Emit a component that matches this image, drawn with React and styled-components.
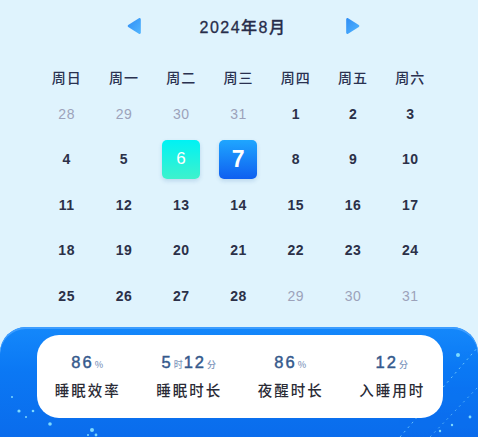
import styled, { createGlobalStyle } from 'styled-components'

const GlobalStyle = createGlobalStyle`
    html, body {
        margin: 0;
        padding: 0;
        background: #dff3fd;
    }
    body {
        font-family: "Liberation Sans", "Noto Sans CJK SC", sans-serif;
    }
`

const Page = styled.div`
    height: 437px;
    display: flex;
    flex-direction: column;
    background: #dff3fd;
    overflow: hidden;
`

const Header = styled.div`
    height: 52px;
    display: flex;
    align-items: center;
    justify-content: center;
    gap: 58px;
    padding-left: 8px;
`

const Title = styled.div`
    font-size: 16px;
    letter-spacing: 1.5px;
    color: #272d4a;
    font-weight: 500;
    -webkit-text-stroke: 0.3px #272d4a;
`

const ArrowButton = styled.svg`
    width: 16px;
    height: 20px;
    display: block;
`

const Grid = styled.div`
    margin: 11px 0 0 38px;
    width: 401px;
    display: grid;
    grid-template-columns: repeat(7, 1fr);
`

const WeekCell = styled.div`
    height: 28px;
    display: flex;
    align-items: center;
    justify-content: center;
    font-family: "Noto Sans CJK SC", sans-serif;
    font-size: 14px;
    font-weight: 500;
    letter-spacing: 1px;
    color: #2a3150;
`

const DayCell = styled.div`
    height: 45.5px;
    display: flex;
    align-items: center;
    justify-content: center;
`

const Day = styled.div`
    width: 38px;
    height: 39px;
    border-radius: 5px;
    display: flex;
    align-items: center;
    justify-content: center;
    font-size: ${p => p.$today ? '23px' : p.$picked ? '17px' : '14px'};
    font-weight: ${p => p.$muted ? 400 : p.$picked ? 400 : 600};
    letter-spacing: 0.5px;
    color: ${p => (p.$today || p.$picked) ? '#fff' : p.$muted ? '#9ca2ba' : '#2b3048'};
    background: ${p => p.$today
        ? 'linear-gradient(180deg, #1fa6ff 0%, #0f5ff0 100%)'
        : p.$picked
            ? 'linear-gradient(180deg, #00f2f4 0%, #3ef2cc 100%)'
            : 'transparent'};
    box-shadow: ${p => (p.$today || p.$picked) ? '0 2px 4px rgba(20, 90, 160, 0.18)' : 'none'};
`

const Panel = styled.div`
    position: relative;
    margin-top: 8px;
    flex: 1;
    border-radius: 26px 26px 0 0;
    background: linear-gradient(180deg, #1488fb 0%, #0b78f4 40%, #0a6cec 100%);
    box-shadow: inset 0 2px 0 #3d9dff;
    padding: 8px 35px 0 37px;
    overflow: hidden;
`

const Sparkles = styled.svg`
    position: absolute;
    left: 0;
    top: 0;
    width: 478px;
    height: 110px;
    pointer-events: none;
`

const Card = styled.div`
    position: relative;
    height: 83px;
    background: #fff;
    border-radius: 22px;
    display: grid;
    grid-template-columns: repeat(4, 1fr);
`

const Stat = styled.div`
    display: flex;
    flex-direction: column;
    align-items: center;
    padding-top: 18px;
    gap: 6px;
`

const Value = styled.div`
    font-size: 16.5px;
    font-weight: 400;
    letter-spacing: 2px;
    color: #35598c;
    -webkit-text-stroke: 0.45px #35598c;
    line-height: 18px;
`

const Unit = styled.span`
    font-family: "Noto Sans CJK SC", sans-serif;
    font-size: 9px;
    font-weight: 500;
    letter-spacing: 0;
    color: #7f97bd;
    -webkit-text-stroke: 0;
    margin: 0 1px;
`

const Label = styled.div`
    font-family: "Noto Sans CJK SC", sans-serif;
    font-size: 14.5px;
    font-weight: 500;
    letter-spacing: 2px;
    color: #2a2b36;
    line-height: 20px;
`

const Arrow = ({ dir }) => (
    <ArrowButton viewBox="0 0 15 19">
        <defs>
            <linearGradient id={`ag-${dir}`} x1="0" y1="0" x2="1" y2="1">
                <stop offset="0" stopColor="#2f8df5" />
                <stop offset="1" stopColor="#52b6ff" />
            </linearGradient>
        </defs>
        {dir === 'left'
            ? <path d="M12.5 2 Q14 1.5 14 3.5 L14 15.5 Q14 17.5 12.5 17 L2 10.5 Q0.8 9.5 2 8.5 Z" fill={`url(#ag-${dir})`} />
            : <path d="M2.5 2 Q1 1.5 1 3.5 L1 15.5 Q1 17.5 2.5 17 L13 10.5 Q14.2 9.5 13 8.5 Z" fill={`url(#ag-${dir})`} />}
    </ArrowButton>
)

const weeks = ['周日', '周一', '周二', '周三', '周四', '周五', '周六']

// 7月末尾 + 8月全部 + 9月开头
const calendar = [
    ...[28, 29, 30, 31].map(n => ({ n, muted: true })),
    ...Array.from({ length: 28 }, (_, i) => ({ n: i + 1 })),
    ...[29, 30, 31].map(n => ({ n, muted: true })),
]

const stats = [
    { parts: [['86', '%']], label: '睡眠效率' },
    { parts: [['5', '时'], ['12', '分']], label: '睡眠时长' },
    { parts: [['86', '%']], label: '夜醒时长' },
    { parts: [['12', '分']], label: '入睡用时' },
]

const dots = [
    [19, 84, 1.6], [33, 84, 1.3], [26, 90, 1], [50, 97, 1.8], [92, 103, 2], [96, 108, 1.4],
    [88, 108, 1], [12, 70, 1], [458, 28, 2], [437, 46, 1.6], [417, 55, 1.2], [470, 90, 1.4],
    [452, 98, 1.2], [440, 104, 1.2],
]

const App = () => {
    return (
        <Page>
            <GlobalStyle />
            <Header>
                <Arrow dir="left" />
                <Title>2024年8月</Title>
                <Arrow dir="right" />
            </Header>
            <Grid>
                {weeks.map(w => <WeekCell key={w}>{w}</WeekCell>)}
                {calendar.map((d, i) => (
                    <DayCell key={i}>
                        <Day $muted={d.muted} $picked={!d.muted && d.n === 6} $today={!d.muted && d.n === 7}>
                            {d.n}
                        </Day>
                    </DayCell>
                ))}
            </Grid>
            <Panel>
                <Sparkles viewBox="0 0 478 110">
                    <path d="M400 110 L478 20" stroke="#7fd6ff" strokeWidth="1" strokeDasharray="2 4" opacity="0.8" />
                    <path d="M430 110 L478 60" stroke="#7fd6ff" strokeWidth="1" strokeDasharray="2 4" opacity="0.6" />
                    {dots.map(([x, y, r], i) => (
                        <circle key={i} cx={x} cy={y} r={r} fill="#8ae4ff" opacity="0.9" />
                    ))}
                </Sparkles>
                <Card>
                    {stats.map(s => (
                        <Stat key={s.label}>
                            <Value>
                                {s.parts.map(([v, u]) => (
                                    <span key={u}>{v}<Unit>{u}</Unit></span>
                                ))}
                            </Value>
                            <Label>{s.label}</Label>
                        </Stat>
                    ))}
                </Card>
            </Panel>
        </Page>
    )
}

export default App
